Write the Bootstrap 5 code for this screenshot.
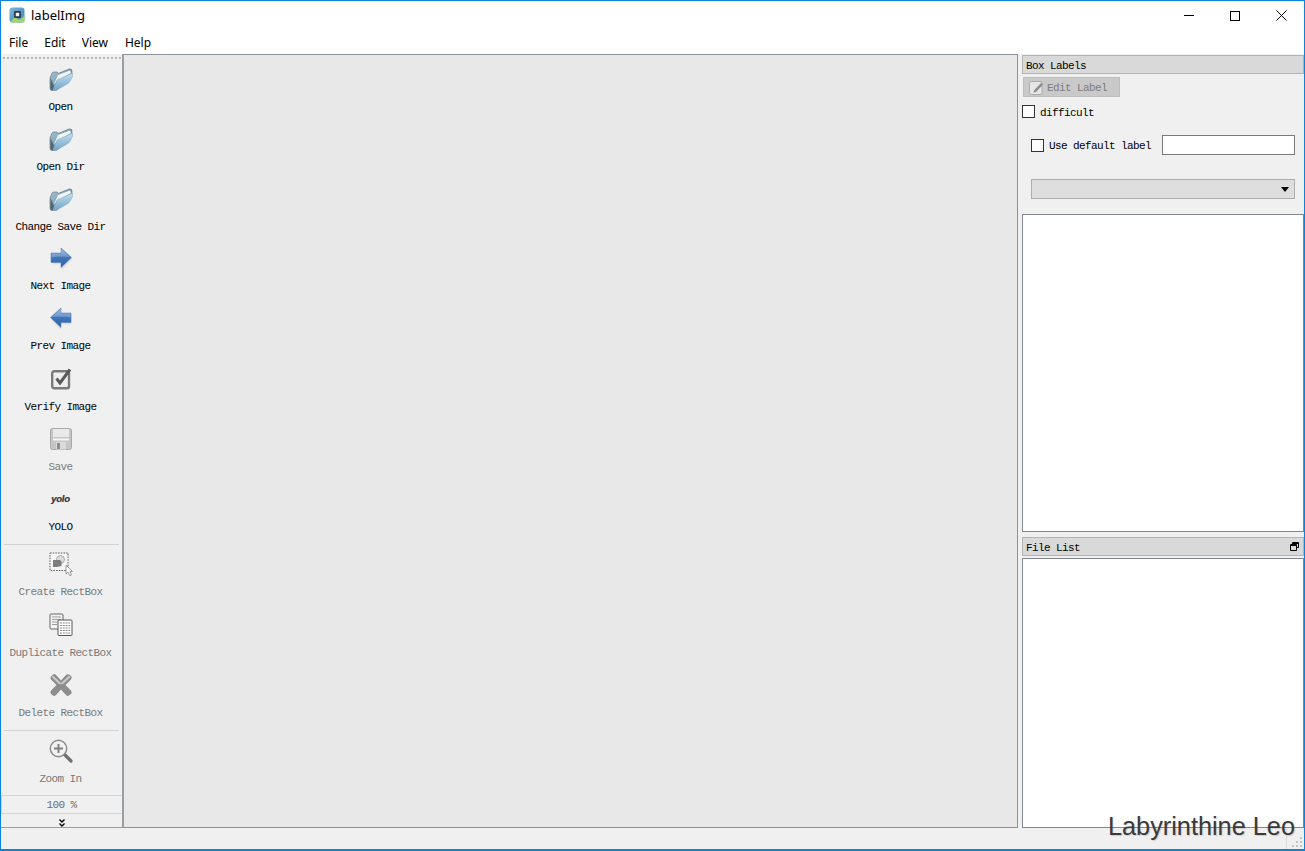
<!DOCTYPE html>
<html lang="en">
<head>
<meta charset="utf-8">
<title>labelImg</title>
<link href="https://cdn.jsdelivr.net/npm/bootstrap@5.3.0/dist/css/bootstrap.min.css" rel="stylesheet">
<style>
html,body{height:100%;margin:0;overflow:hidden;background:#f0f0f0}
.app-win{height:851px;width:1305px;border:1px solid #0a84dc;border-bottom-width:2px;background:#f0f0f0;position:relative;color:#000}
.title-strip{height:29px;background:#fff;font:13px/1 "Noto Sans",sans-serif;padding-left:8px;flex:none}
.title-strip .win-name{margin-left:5px;margin-top:-1px}
.win-ctl{width:46px;height:29px;display:flex;align-items:center;justify-content:center}
.menu-strip{height:24px;background:#fff;font:12px/1 "Noto Sans",sans-serif;flex:none;padding-left:8px;padding-top:2px}
.menu-strip span{margin-right:16px}
.menu-strip span:nth-child(3){margin-right:17px}
.main-row{height:774px;flex:none}
.tool-col{width:121px;flex:none;font:11px/12px "Liberation Mono",monospace;letter-spacing:-.6px}
.grip{height:4px;border-top:2px dotted #b9b9b9;margin:3px 1px 0 2px;flex:none}
.tool-item{height:60px;flex:none;display:flex;flex-direction:column;align-items:center;padding:2px 2px 0 0}
.tool-item.t59{height:59px}
.tool-item.t61{height:61px}
.tool-item.t56{height:56px}
.tool-item.t57{height:57px}
.tool-item svg,.yolo-mark{width:24px;height:24px;flex:none;display:block}
.tool-item .tool-cap{margin-top:10px;white-space:nowrap;height:12px}
.tool-off{color:#7a7a7a}
.tool-rule{height:1px;background:#d2d2d2;margin:3px 3px 5px 3px;flex:none}
.tool-rule.rule-b{margin:2px 3px 6px 3px}
.tool-first{margin-top:4px}
.yolo-mark{font:italic 900 9.5px/24px "Liberation Sans",sans-serif;letter-spacing:-.2px;text-align:center;color:#333;-webkit-text-stroke:.2px #333}
.zoom-box{height:19px;border:1px solid #d4d4d4;border-right:0;margin-top:1px;text-align:center;color:#6d6d6d;line-height:18px;flex:none;padding-right:1px;font-size:11px}
.more-box{flex:1;display:flex;justify-content:center;align-items:flex-start;padding-top:5px;border-bottom:1px solid #9d9d9d}
.canvas-pane{width:896px;flex:none;background:#e8e8e8;border:1px solid #8b9299;border-left:2px solid #9a9fa4}
.dock-col{width:282px;margin-left:4px;flex:none;font:11px/12px "Liberation Mono",monospace;letter-spacing:-.6px;padding-top:1px}
.dock-head{height:19px;background:#d9d9d9;border:1px solid #b4b4b4;padding-left:3px;line-height:17px;display:flex;justify-content:space-between;align-items:center;flex:none}
.head-txt{padding-top:3px}
.edit-btn,.edit-btn:disabled{width:97px;height:20px;background:#c9c9c9;border:1px solid #bdbdbd;border-radius:0;margin:3px 0 0 1px;padding:0 0 0 5px;color:#7c7c7c;font:inherit;letter-spacing:inherit;display:flex;align-items:center;gap:3px;opacity:1}
.sq-check{width:13px;height:13px;border:1px solid #333;background:#fff;flex:none}
.low-txt{padding-top:2px}
.diff-row{margin-top:8px;height:13px;gap:5px}
.dflt-row{margin-top:17px;height:20px;padding-left:9px;gap:5px}
.dflt-input{width:133px;height:20px;min-height:0;border:1px solid #7a7a7a;background:#fff;margin-left:6px;border-radius:0;padding:0;flex:none}
.combo-box{height:20px;width:264px;margin:24px 0 0 9px;background:#dedede;border:1px solid #adadad;position:relative;flex:none}
.combo-arrow{position:absolute;right:5px;top:7px;width:0;height:0;border-left:4px solid transparent;border-right:4px solid transparent;border-top:5px solid #000}
.white-list{background:#fff;border:1px solid #828790;border-radius:0;flex:none}
.list-a{height:318px;margin-top:15px}
.head-b{margin-top:5px;padding-right:4px}
.list-b{height:270px;margin-top:2px}
.status-strip{flex:1;background:#f0f0f0}
.status-cell{width:18px;border-left:1px solid #dcdcdc}
.mark-text{position:absolute;right:9px;top:810px;font:25.3px/30px "Liberation Sans",sans-serif;color:#3a3a3a;white-space:nowrap;text-shadow:1px 1px 1px rgba(0,0,0,.15)}
.size-grip{position:absolute;right:1px;bottom:1px}
</style>
</head>
<body>
<div class="app-win d-flex flex-column">
  <div class="title-strip d-flex align-items-center">
    <svg width="17" height="17" viewBox="0 0 17 17">
      <defs><linearGradient id="lg" x1="0" y1="0" x2="1" y2="1"><stop offset="0" stop-color="#7fb6dc"/><stop offset=".65" stop-color="#4f93c4"/></linearGradient></defs>
      <rect x="0.5" y="0.5" width="15" height="15" rx="3" fill="url(#lg)"/>
      <path d="M1 15.5 L6 9.5 L10 13 L15.5 9 L15.5 15.5 Z" fill="#a6d36a"/>
      <rect x="5" y="4" width="7" height="7" rx="1" fill="#2f3d46"/>
      <rect x="6.800" y="5.800" width="3.400" height="3.400" fill="#f4f4f4"/>
    </svg>
    <span class="win-name">labelImg</span>
    <div class="ms-auto d-flex">
      <div class="win-ctl"><svg width="10" height="10" viewBox="0 0 10 10"><path d="M0 4.500H10" stroke="#000"/></svg></div>
      <div class="win-ctl"><svg width="10" height="10" viewBox="0 0 10 10"><rect x=".5" y=".5" width="9" height="9" fill="none" stroke="#000"/></svg></div>
      <div class="win-ctl"><svg width="11" height="11" viewBox="0 0 11 11"><path d="M.5 .5L10.500 10.500M10.500 .5L.5 10.500" stroke="#000"/></svg></div>
    </div>
  </div>
  <div class="menu-strip d-flex align-items-center"><span>File</span><span>Edit</span><span>View</span><span>Help</span></div>
  <div class="d-flex main-row">
    <div class="tool-col d-flex flex-column">
      <div class="grip"></div>
      <svg width="0" height="0" class="position-absolute">
        <defs>
          <linearGradient id="fb" x1="0" y1="0" x2="1" y2="1"><stop offset="0" stop-color="#a7c6d8"/><stop offset="1" stop-color="#5d7f93"/></linearGradient>
          <linearGradient id="ff" x1="0" y1="0" x2="0" y2="1"><stop offset="0" stop-color="#c4deec"/><stop offset="1" stop-color="#6fa5c8"/></linearGradient>
          <linearGradient id="ab" x1="0" y1="0" x2="0" y2="1"><stop offset="0" stop-color="#86aedb"/><stop offset=".5" stop-color="#3f74b8"/><stop offset="1" stop-color="#2f62a6"/></linearGradient>
          <symbol id="i-folder" viewBox="0 0 24 24">
            <path d="M1 11 L3 6 Q3.500 5 5 5 L8 5 L9 6.500 L20 2 Q22.500 1.500 23 3 L22.500 9 L8 23 L3 23.500 Q1 23.500 1 21 Z" fill="url(#fb)" stroke="#5c6c76" stroke-width=".6"/>
            <path d="M5 17 L9 8 L21 3.500 L22 6 L9 14 Z" fill="#f2f6f8"/>
            <path d="M4 23 L8 13 L23.500 6 Q24 7 23.500 9.500 L20.500 15 Q20 16 18 17 L7 23.500 Z" fill="url(#ff)" stroke="#7ba4bd" stroke-width=".5"/>
            <path d="M1.500 11 L1.500 21 Q1.500 23 3.500 23.500 L5 19 Z" fill="#57656e"/>
          </symbol>
        </defs>
      </svg>
      <div class="tool-item tool-first"><svg><use href="#i-folder"/></svg><div class="tool-cap">Open</div></div>
      <div class="tool-item"><svg><use href="#i-folder"/></svg><div class="tool-cap">Open Dir</div></div>
      <div class="tool-item t59"><svg><use href="#i-folder"/></svg><div class="tool-cap">Change Save Dir</div></div>
      <div class="tool-item"><svg viewBox="0 0 24 24"><path d="M3 7.500 H12 V2.500 L23 12.500 L12 23 V17.500 H3 Z" fill="#000" opacity=".08" transform="translate(.6 .8)"/><path d="M2 7 H12 V2 L22.500 11.500 L12 21.500 V16.500 H2 Z" fill="url(#ab)" stroke="#4a7bb8" stroke-width=".5"/><path d="M2.500 7.500H12V3L21 11.200Q12 9.500 2.500 11.500Z" fill="#fff" opacity=".22"/></svg><div class="tool-cap">Next Image</div></div>
      <div class="tool-item t61"><svg viewBox="0 0 24 24"><path d="M23 7.500 H12 V2.500 L2 12.500 L12 23 V17.500 H23 Z" fill="#000" opacity=".08" transform="translate(-.4 .8)"/><path d="M22 7 H12 V2 L1.500 11.500 L12 21.500 V16.500 H22 Z" fill="url(#ab)" stroke="#4a7bb8" stroke-width=".5"/><path d="M21.500 7.500H12V3L3 11.200Q12 9.500 21.500 11.500Z" fill="#fff" opacity=".22"/></svg><div class="tool-cap">Prev Image</div></div>
      <div class="tool-item"><svg viewBox="0 0 24 24"><rect x="3.200" y="4.200" width="16.800" height="17" rx="2" fill="#f0f0f0" stroke="#7a7a7a" stroke-width="2.400"/><path d="M7.500 11.500 L11 16 L21 2.500" fill="none" stroke="#5a5a5a" stroke-width="3"/></svg><div class="tool-cap">Verify Image</div></div>
      <div class="tool-item tool-off"><svg viewBox="0 0 24 24"><rect x="1.500" y="1.500" width="21" height="21" rx="2" fill="#c6c6c6" stroke="#a9a9a9"/><rect x="4" y="2" width="16" height="8" fill="#e9e9e9"/><rect x="4" y="11.500" width="16" height="2" fill="#f5f5f5"/><rect x="7" y="15" width="10" height="7.500" fill="#dadada"/><rect x="8" y="16" width="3" height="6" fill="#8d8d8d"/></svg><div class="tool-cap">Save</div></div>
      <div class="tool-item t56"><div class="yolo-mark">yolo</div><div class="tool-cap">YOLO</div></div>
      <div class="tool-rule"></div>
      <div class="tool-item tool-off t61"><svg viewBox="0 0 24 24"><rect x="1" y="1" width="18" height="17.500" fill="#f6f6f6" stroke="#555" stroke-dasharray="1.500 1.200"/><circle cx="11.500" cy="7.500" r="4" fill="#dcdcdc" stroke="#aaa"/><path d="M4 8 H11 L12.500 9.500 V14 L8 15 H4 Z" fill="#7d7d7d"/><path d="M17 13 V22 L19 20 L21 24 L22.500 23 L21 19.500 L23.500 19.500 Z" fill="#fff" stroke="#777" stroke-width=".7"/></svg><div class="tool-cap">Create RectBox</div></div>
      <div class="tool-item tool-off"><svg viewBox="0 0 24 24"><rect x="1" y="1" width="13" height="15" rx="1" fill="#f4f4f4" stroke="#666"/><path d="M3 4H12M3 6.500H12M3 9H8M3 11.500H8" stroke="#9b9b9b"/><rect x="9" y="7" width="14" height="15.500" rx="1" fill="#fff" stroke="#555"/><path d="M11 10H21M11 12.500H21M11 15H21M11 17.500H21M11 20H21" stroke="#888" stroke-dasharray="2 .8"/></svg><div class="tool-cap">Duplicate RectBox</div></div>
      <div class="tool-item tool-off t57"><svg viewBox="0 0 24 24"><path d="M4 1.500 Q5.500 0.500 7 2 L12 7.500 L17 2 Q18.500 .5 21 2 L22.500 3.500 Q23 5 22 6.500 L16.500 12 L22 17.500 Q23.500 19.500 22 21 L20 22.500 Q18.500 23.500 17 22 L12 16.500 L7 22 Q5.500 23.500 4 22.500 L2 21 Q.8 19.500 2 17.500 L7.500 12 L2 6.500 Q.8 5 2 3.500 Z" fill="#8d8d8d"/><path d="M4 2.500 L12 10 L20 2.500 L21.500 4 L14 11 H10 L2.800 4 Z" fill="#c9c9c9"/></svg><div class="tool-cap">Delete RectBox</div></div>
      <div class="tool-rule rule-b"></div>
      <div class="tool-item tool-off t57"><svg viewBox="0 0 24 24"><path d="M15 15 L22 22" stroke="#6e6e6e" stroke-width="3.200" stroke-linecap="round"/><circle cx="9.500" cy="9.500" r="8.200" fill="#f1f1f1" stroke="#8a8a8a" stroke-width="1.400"/><path d="M9.500 5V14M5 9.500H14" stroke="#808080" stroke-width="2"/></svg><div class="tool-cap">Zoom In</div></div>
      <div class="zoom-box">100 %</div>
      <div class="more-box"><svg width="6" height="8" viewBox="0 0 6 8"><path d="M.5 .5L3 3L5.500 .5M.5 4.500L3 7L5.500 4.500" fill="none" stroke="#000" stroke-width="1.400"/></svg></div>
    </div>
    <div class="canvas-pane"></div>
    <div class="dock-col d-flex flex-column">
      <div class="dock-head"><span class="head-txt">Box Labels</span></div>
      <button class="btn edit-btn" type="button" disabled>
        <svg width="15" height="15" viewBox="0 0 15 15" class="flex-shrink-0"><rect x=".5" y="1.500" width="12.500" height="13" rx="2" fill="#e6e6e6" stroke="#aaa"/><path d="M5 10.500L12 3L14 4.500L7 12L4.500 12.500Z" fill="#8c8c8c"/></svg>
        <span class="low-txt">Edit Label</span>
      </button>
      <div class="d-flex align-items-center diff-row"><span class="sq-check"></span><span class="low-txt">difficult</span></div>
      <div class="d-flex align-items-center dflt-row"><span class="sq-check"></span><span class="low-txt">Use default label</span><input class="form-control dflt-input" type="text" aria-label="default label"></div>
      <div class="combo-box"><span class="combo-arrow"></span></div>
      <div class="white-list list-a"></div>
      <div class="dock-head head-b"><span class="head-txt">File List</span><svg width="9" height="9" viewBox="0 0 9 9"><path d="M2.500 2.500V.5H8.500V5.500H6.500M.5 2.500H6.500V8.500H.5ZM.5 3.500H6.500M2.500 1.500H8.500" fill="none" stroke="#000"/></svg></div>
      <div class="white-list list-b"></div>
    </div>
  </div>
  <div class="status-strip d-flex justify-content-end"><div class="status-cell"></div></div>
  <div class="mark-text">Labyrinthine Leo</div>
  <svg class="size-grip" width="12" height="12" viewBox="0 0 12 12"><path d="M9 1h2v2H9zM5 5h2v2H5zM9 5h2v2H9zM1 9h2v2H1zM5 9h2v2H5zM9 9h2v2H9z" fill="#c4c4c4"/></svg>
</div>
<script src="https://cdn.jsdelivr.net/npm/bootstrap@5.3.0/dist/js/bootstrap.bundle.min.js"></script>
</body>
</html>
